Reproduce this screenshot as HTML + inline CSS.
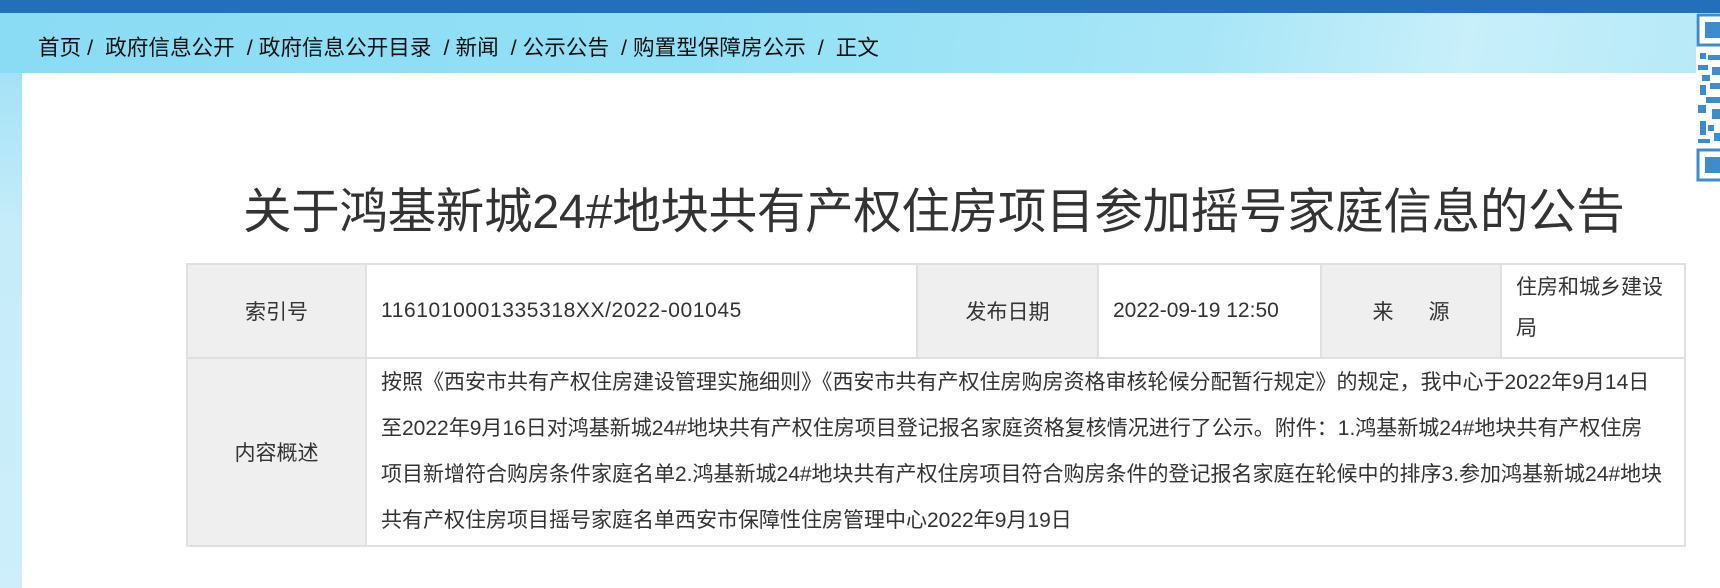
<!DOCTYPE html>
<html><head><meta charset="utf-8"><style>
*{margin:0;padding:0;box-sizing:border-box}
body{width:1720px;height:588px;overflow:hidden;background:#fff;font-family:"Liberation Sans","Noto Sans CJK SC",sans-serif;color:#333;position:relative}
.top{position:absolute;left:0;top:0;width:1720px;height:13px;background:#236fba}
.banner{position:absolute;left:0;top:13px;width:1720px;height:60px;background:linear-gradient(100deg,#8adcf4 0%,#92e0f6 40%,#a8e6f7 70%,#c8effa 85%,#b5e9f8 100%)}
.lstrip{position:absolute;left:0;top:73px;width:22px;height:515px;background:linear-gradient(180deg,#a4e2f6,#c6ecf9 30%,#cdeefa 100%)}
.crumb{position:absolute;left:38px;top:31px;font-size:21.6px;color:#111;white-space:nowrap}
.title{position:absolute;left:243px;top:172px;font-size:48.5px;color:#333;white-space:nowrap;letter-spacing:-0.3px}
table{position:absolute;left:186px;top:263px;border-collapse:collapse;font-size:21px;color:#333;table-layout:fixed}
td{border:2px solid #e0e0e0;vertical-align:middle}
.l{background:#efefef;text-align:center}
.qr{position:absolute;left:1696px;top:13px;width:24px;height:170px}
</style></head><body>
<div class="top"></div>
<div class="banner"></div>
<div class="lstrip"></div>
<div class="crumb">首页 /&nbsp; 政府信息公开 &nbsp;/ 政府信息公开目录 &nbsp;/ 新闻 &nbsp;/ 公示公告 &nbsp;/ 购置型保障房公示 &nbsp;/&nbsp; 正文</div>
<div class="title">关于鸿基新城24#地块共有产权住房项目参加摇号家庭信息的公告</div>
<table>
<colgroup><col style="width:179px"><col style="width:551px"><col style="width:181px"><col style="width:223px"><col style="width:180px"><col style="width:184px"></colgroup>
<tr style="height:94px">
<td class="l">索引号</td>
<td style="padding-left:14px;letter-spacing:0.6px">1161010001335318XX/2022-001045</td>
<td class="l">发布日期</td>
<td style="padding-left:14px">2022-09-19 12:50</td>
<td class="l">来&nbsp;&nbsp;&nbsp;&nbsp;&nbsp;&nbsp;源</td>
<td style="padding-left:14px;line-height:41px;vertical-align:top;padding-top:2px">住房和城乡建设<br>局</td>
</tr>
<tr style="height:188px">
<td class="l">内容概述</td>
<td colspan="5" style="padding-left:14px;line-height:46px;white-space:nowrap">按照《西安市共有产权住房建设管理实施细则》《西安市共有产权住房购房资格审核轮候分配暂行规定》的规定，我中心于2022年9月14日<br>至2022年9月16日对鸿基新城24#地块共有产权住房项目登记报名家庭资格复核情况进行了公示。附件：1.鸿基新城24#地块共有产权住房<br>项目新增符合购房条件家庭名单2.鸿基新城24#地块共有产权住房项目符合购房条件的登记报名家庭在轮候中的排序3.参加鸿基新城24#地块<br>共有产权住房项目摇号家庭名单西安市保障性住房管理中心2022年9月19日</td>
</tr>
</table>
<svg class="qr" viewBox="0 0 24 170" width="24" height="170">
<rect x="0" y="0" width="24" height="170" fill="#fff"/>
<g fill="none" stroke="#3f8ccc" stroke-width="3">
<rect x="2" y="2" width="30" height="30"/>
<rect x="2" y="137" width="30" height="30"/>
</g>
<rect x="9" y="9" width="16" height="16" fill="#3f8ccc"/>
<rect x="9" y="144" width="16" height="16" fill="#3f8ccc"/>
<g fill="#3f8ccc">
<rect x="4" y="40" width="6" height="6"/><rect x="12" y="42" width="12" height="5"/>
<rect x="2" y="52" width="10" height="5"/><rect x="16" y="54" width="8" height="8"/>
<rect x="6" y="62" width="8" height="6"/><rect x="4" y="72" width="6" height="10"/>
<rect x="14" y="70" width="10" height="6"/><rect x="10" y="84" width="14" height="6"/>
<rect x="2" y="92" width="8" height="8"/><rect x="16" y="96" width="8" height="10"/>
<rect x="4" y="108" width="6" height="14"/><rect x="12" y="112" width="6" height="6"/>
<rect x="18" y="120" width="6" height="8"/><rect x="2" y="126" width="12" height="4"/>
</g>
</svg>
</body></html>
